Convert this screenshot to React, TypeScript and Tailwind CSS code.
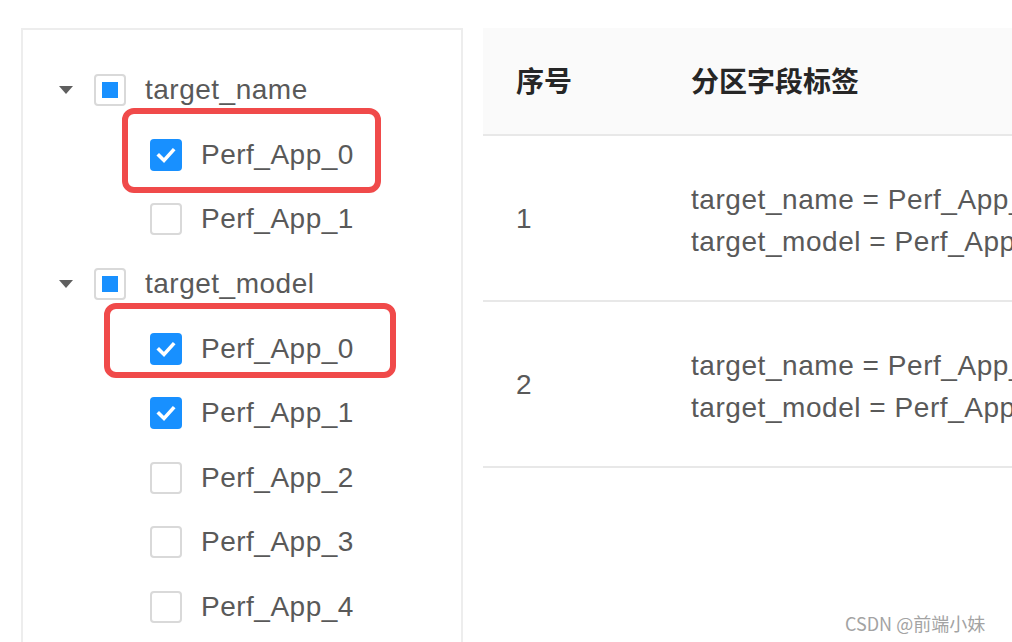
import React from 'react';

const latin = "font-['Liberation_Sans','Noto_Sans_CJK_SC',sans-serif]";

type CheckState = 'checked' | 'unchecked' | 'indeterminate';

const Checkbox = ({ state }: { state: CheckState }) => {
    if (state === 'checked') {
        return (
            <span className="flex h-[32px] w-[32px] shrink-0 items-center justify-center rounded-[4px] bg-[#1890ff]">
                <svg width="32" height="32" viewBox="0 0 32 32">
                    <polyline points="9,16.5 14,21.5 23,11.5" fill="none" stroke="#fff" strokeWidth="3.6" strokeLinecap="square" />
                </svg>
            </span>
        );
    }
    return (
        <span className="flex h-[32px] w-[32px] shrink-0 items-center justify-center rounded-[4px] border-2 border-[#d9d9d9] bg-white">
            {state === 'indeterminate' && <span className="h-[16px] w-[16px] bg-[#1890ff]" />}
        </span>
    );
};

const Caret = () => (
    <svg width="14" height="8" viewBox="0 0 14 8" className="shrink-0">
        <polygon points="0,0 14,0 7,8" fill="#5f5f5f" />
    </svg>
);

interface Group {
    name: string;
    children: { label: string; checked: boolean; marked?: boolean }[];
}

const groups: Group[] = [
    {
        name: 'target_name',
        children: [
            { label: 'Perf_App_0', checked: true, marked: true },
            { label: 'Perf_App_1', checked: false },
        ],
    },
    {
        name: 'target_model',
        children: [
            { label: 'Perf_App_0', checked: true, marked: true },
            { label: 'Perf_App_1', checked: true },
            { label: 'Perf_App_2', checked: false },
            { label: 'Perf_App_3', checked: false },
            { label: 'Perf_App_4', checked: false },
        ],
    },
];

const rows = [
    { no: 1, tags: ['target_name = Perf_App_0', 'target_model = Perf_App_0'] },
    { no: 2, tags: ['target_name = Perf_App_0', 'target_model = Perf_App_1'] },
];

const Tree = () => (
    <div className="h-[700px] w-[442px] shrink-0 border-2 border-[#ededed] bg-white pt-[28px]">
        {groups.map((g, gi) => (
            <div key={gi}>
                <div className="flex h-[64.6px] items-center pl-[36px]">
                    <Caret />
                    <span className="ml-[21px]"><Checkbox state="indeterminate" /></span>
                    <span className={`ml-[19px] text-[28px] tracking-[0.5px] text-[#595959] ${latin}`}>{g.name}</span>
                </div>
                {g.children.map((c, ci) => (
                    <div key={ci} className="relative flex h-[64.6px] items-center pl-[127px]">
                        {/* red annotation boxes from the screenshot */}
                        {c.marked && (
                            <span
                                className={
                                    gi === 0
                                        ? 'pointer-events-none absolute left-[99px] top-[-15px] h-[85px] w-[259px] rounded-[12px] border-[6px] border-[#f04a4a]'
                                        : 'pointer-events-none absolute left-[81px] top-[-13px] h-[75px] w-[292px] rounded-[12px] border-[6px] border-[#f04a4a]'
                                }
                            />
                        )}
                        <Checkbox state={c.checked ? 'checked' : 'unchecked'} />
                        <span className={`ml-[19px] text-[28px] tracking-[0.5px] text-[#595959] ${latin}`}>{c.label}</span>
                    </div>
                ))}
            </div>
        ))}
    </div>
);

const Table = () => (
    <div className="w-[800px] shrink-0">
        <div className="flex h-[108px] items-center border-b-2 border-[#e8e8e8] bg-[#fafafa] pb-[2px]">
            <div className="w-[175px] pl-[33px] text-[28px] font-bold text-[#262626] font-['Noto_Sans_CJK_SC',sans-serif]">序号</div>
            <div className="pl-[33px] text-[28px] font-bold text-[#262626] font-['Noto_Sans_CJK_SC',sans-serif]">分区字段标签</div>
        </div>
        {rows.map((r) => (
            <div key={r.no} className="flex h-[166px] items-center border-b-2 border-[#e8e8e8] pb-[2px]">
                <div className={`mt-[4px] w-[175px] pl-[33px] text-[28px] text-[#595959] ${latin}`}>{r.no}</div>
                <div className="mt-[8px] pl-[33px]">
                    {r.tags.map((t, i) => (
                        <div key={i} className={`whitespace-nowrap text-[28px] leading-[42px] tracking-[0.55px] text-[#595959] ${latin}`}>{t}</div>
                    ))}
                </div>
            </div>
        ))}
    </div>
);

export default function App() {
    return (
        <div className="relative h-[642px] w-[1012px] overflow-hidden bg-white">
            <div className="flex gap-[20px] pl-[21px] pt-[28px]">
                <Tree />
                <Table />
            </div>
            <div className="absolute left-[845px] top-[611px] text-[18px] leading-[24px] text-[#a3a3a3] font-['Noto_Sans_CJK_SC',sans-serif]">
                CSDN @前端小妹
            </div>
        </div>
    );
}
